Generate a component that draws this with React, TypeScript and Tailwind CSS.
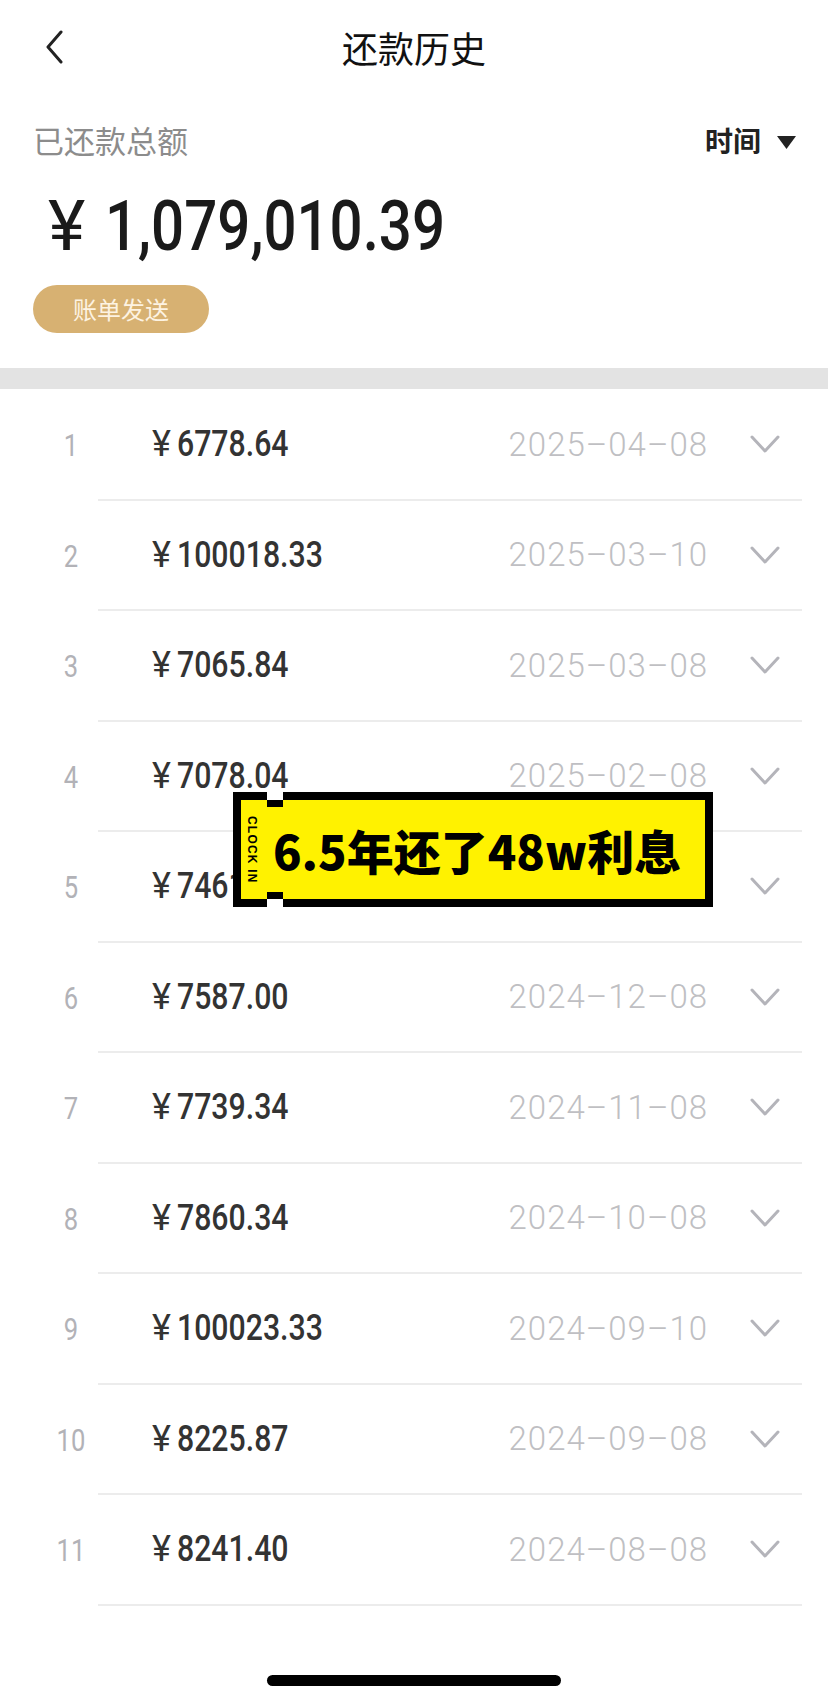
import React from 'react'

type Payment = { amount: string; date: string }

const payments: Payment[] = [
  { amount: '6778.64', date: '2025–04–08' },
  { amount: '100018.33', date: '2025–03–10' },
  { amount: '7065.84', date: '2025–03–08' },
  { amount: '7078.04', date: '2025–02–08' },
  { amount: '7461.52', date: '2025–01–08' },
  { amount: '7587.00', date: '2024–12–08' },
  { amount: '7739.34', date: '2024–11–08' },
  { amount: '7860.34', date: '2024–10–08' },
  { amount: '100023.33', date: '2024–09–10' },
  { amount: '8225.87', date: '2024–09–08' },
  { amount: '8241.40', date: '2024–08–08' },
]

export default function App() {
  return (
    <div className="relative mx-auto h-[1700px] w-[828px] overflow-hidden bg-white font-['Roboto','Noto_Sans_CJK_SC',sans-serif] text-[#1a1a1a]">
      {/* Nav bar */}
      <div className="relative flex h-[94px] items-center justify-center">
        <button className="absolute left-[45px] top-[30px]" aria-label="back">
          <svg width="18" height="34" viewBox="0 0 18 34" fill="none">
            <polyline points="16,2 3,17 16,32" stroke="#222" strokeWidth="3" strokeLinecap="round" strokeLinejoin="round" />
          </svg>
        </button>
        <h1 className="font-['Noto_Sans_CJK_SC',sans-serif] text-[36px] leading-none text-[#111]">还款历史</h1>
      </div>

      {/* Summary */}
      <div className="pl-[33px] pr-[32px]">
        <div className="mt-[31px] flex items-center justify-between">
          <span className="font-['Noto_Sans_CJK_SC',sans-serif] text-[31px] leading-[30px] text-[#8c8c8c]">已还款总额</span>
          <div className="flex items-center gap-[16px]">
            <span className="font-['Noto_Sans_CJK_SC',sans-serif] text-[28px] font-bold leading-[30px] text-[#222]">时间</span>
            <svg width="19" height="13" viewBox="0 0 19 13" className="translate-y-[2px]">
              <polygon points="0,0 19,0 9.5,13" fill="#222" />
            </svg>
          </div>
        </div>

        <div className="mt-[36px] flex h-[70px] items-center pl-[15px] leading-[70px]">
          <span className="text-[71px] font-normal leading-[70px]">¥</span>
          <span className="ml-[20px] inline-block origin-left scale-x-[0.82] text-[71px] font-medium leading-[70px]">1,079,010.39</span>
        </div>

        <button className="mt-[24px] flex h-[48px] w-[176px] items-center justify-center rounded-full bg-[#d7b172] font-['Noto_Sans_CJK_SC',sans-serif] text-[24px] leading-none text-[#fdf3e2]">
          账单发送
        </button>
      </div>

      <div className="mt-[35px] h-[21px] bg-[#e3e3e3]" />

      {/* List */}
      <div className="pt-[1px]">
        {payments.map((p, i) => (
          <PaymentRow key={i} index={i + 1} amount={p.amount} date={p.date} />
        ))}
      </div>

      {/* Home indicator */}
      <div className="mt-[69px] flex justify-center">
        <div className="h-[11px] w-[294px] rounded-full bg-black" />
      </div>

      {/* Sticker overlay */}
      <div className="absolute left-[233px] top-[792px] flex h-[115px] w-[480px] items-center border-8 border-black bg-[#fff200]">
        <span className="absolute -top-[8px] left-[26px] h-[8px] w-[16px] bg-white" />
        <span className="absolute left-[26px] top-0 h-[7px] w-[16px] bg-black" />
        <span className="absolute -bottom-[8px] left-[26px] h-[8px] w-[16px] bg-white" />
        <span className="absolute bottom-0 left-[26px] h-[7px] w-[16px] bg-black" />
        <span className="ml-[5px] font-['Liberation_Sans',sans-serif] text-[12px] font-bold leading-none tracking-[1.2px] text-black [writing-mode:vertical-rl]">
          CLOCK IN
        </span>
        <span className="ml-[15px] font-['Noto_Sans_CJK_SC',sans-serif] text-[47px] font-black leading-none text-black">
          6.5年还了48w利息
        </span>
      </div>
    </div>
  )
}

function PaymentRow({ index, amount, date }: { index: number; amount: string; date: string }) {
  return (
    <div className="flex h-[110.5px]">
      <div className="flex w-[98px] items-center justify-center pl-[44px]">
        <span className="inline-block scale-x-[0.8] text-[32px] font-normal leading-none text-[#b2b2b7]">{index}</span>
      </div>
      <div className="mr-[26px] flex flex-1 items-center border-b-2 border-[#ececec] pl-[54px]">
        <span className="text-[36px] leading-none text-[#333]">¥</span>
        <span className="ml-[6px] inline-block origin-left scale-x-[0.84] text-[36px] font-medium leading-none text-[#333]">
          {amount}
        </span>
        <span className="ml-auto text-[33px] font-light leading-none tracking-[1px] text-[#bfbfc3]">{date}</span>
        <svg width="30" height="20" viewBox="0 0 30 20" fill="none" className="ml-[42px] mr-[22px]">
          <polyline points="2,3 15,17 28,3" stroke="#b4b4ba" strokeWidth="3" strokeLinecap="round" strokeLinejoin="round" />
        </svg>
      </div>
    </div>
  )
}
